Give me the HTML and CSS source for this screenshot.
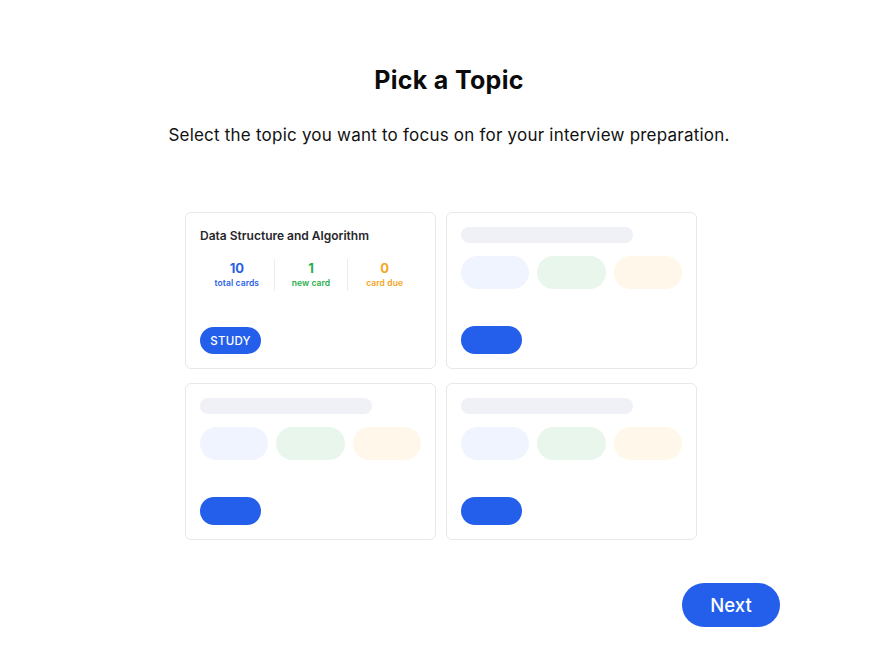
FILE: index.html
```html
<!DOCTYPE html>
<html lang="en">
<head>
<meta charset="utf-8">
<title>Pick a Topic</title>
<link rel="stylesheet" href="styles.css">
</head>
<body>
<main class="page">
  <header class="header">
    <h1 class="title">Pick a Topic</h1>
    <p class="subtitle">Select the topic you want to focus on for your interview preparation.</p>
  </header>

  <section class="grid">
    <article class="card">
      <div class="card-top">
        <h2 class="card-title">Data Structure and Algorithm</h2>
        <div class="stats">
          <div class="stat stat-blue"><span class="num">10</span><span class="lbl">total cards</span></div>
          <div class="stat stat-green"><span class="num">1</span><span class="lbl">new card</span></div>
          <div class="stat stat-orange"><span class="num">0</span><span class="lbl">card due</span></div>
        </div>
      </div>
      <button class="study">STUDY</button>
    </article>

    <article class="card">
      <div class="card-top">
        <div class="sk-bar"></div>
        <div class="sk-pills">
          <span class="sk-pill sk-blue"></span>
          <span class="sk-pill sk-green"></span>
          <span class="sk-pill sk-orange"></span>
        </div>
      </div>
      <span class="sk-btn"></span>
    </article>

    <article class="card">
      <div class="card-top">
        <div class="sk-bar"></div>
        <div class="sk-pills">
          <span class="sk-pill sk-blue"></span>
          <span class="sk-pill sk-green"></span>
          <span class="sk-pill sk-orange"></span>
        </div>
      </div>
      <span class="sk-btn"></span>
    </article>

    <article class="card">
      <div class="card-top">
        <div class="sk-bar"></div>
        <div class="sk-pills">
          <span class="sk-pill sk-blue"></span>
          <span class="sk-pill sk-green"></span>
          <span class="sk-pill sk-orange"></span>
        </div>
      </div>
      <span class="sk-btn"></span>
    </article>
  </section>

  <footer class="footer">
    <button class="next">Next</button>
  </footer>
</main>
</body>
</html>
```

FILE: styles.css
```css
* { box-sizing: border-box; }

html, body {
  margin: 0;
  padding: 0;
  background: #ffffff;
}

body {
  font-family: "Inter", "Open Sans", "DejaVu Sans", sans-serif;
  color: #111111;
}

.page {
  width: 874px;
  height: 665px;
  display: flex;
  flex-direction: column;
  padding-top: 64px;
}

.header {
  padding-left: 24px;
  text-align: center;
}

.title {
  margin: 0;
  font-size: 25px;
  line-height: 32px;
  font-weight: 700;
  color: #0b0b0b;
  letter-spacing: 0.3px;
}

.subtitle {
  margin: 27px 0 0;
  font-size: 17px;
  line-height: 24px;
  font-weight: 400;
  color: #111111;
  letter-spacing: 0.22px;
}

.grid {
  margin: 65px 0 0 185px;
  width: 512px;
  display: grid;
  grid-template-columns: 251px 251px;
  column-gap: 10px;
  row-gap: 14px;
}

.card {
  height: 157px;
  border: 1px solid #e8e8eb;
  border-radius: 6px;
  background: #ffffff;
  padding: 14px 14px 14px;
  display: flex;
  flex-direction: column;
  justify-content: space-between;
  align-items: flex-start;
}

.card-top {
  width: 100%;
}

.card-title {
  margin: 0;
  font-size: 12px;
  line-height: 18px;
  font-weight: 600;
  color: #27272a;
}

.stats {
  margin-top: 14px;
  display: grid;
  grid-template-columns: 1fr 1fr 1fr;
  width: 221px;
}

.stat {
  display: flex;
  flex-direction: column;
  align-items: center;
  padding: 2px 0;
}

.stat + .stat {
  border-left: 1px solid #ececef;
}

.num {
  font-size: 13px;
  line-height: 15px;
  font-weight: 700;
}

.lbl {
  margin-top: 1px;
  font-size: 8.5px;
  line-height: 12px;
  font-weight: 600;
  letter-spacing: 0.1px;
}

.stat-blue { color: #2a5fe8; }
.stat-green { color: #1fae48; }
.stat-orange { color: #f5a524; }

.study {
  height: 27px;
  width: 61px;
  border: none;
  border-radius: 14px;
  background: #245feb;
  color: #ffffff;
  font-family: inherit;
  font-size: 11.5px;
  font-weight: 500;
  letter-spacing: 0.2px;
  padding: 0;
}

.sk-bar {
  width: 172px;
  height: 16px;
  border-radius: 8px;
  background: #f0f1f6;
}

.sk-pills {
  margin-top: 13px;
  display: flex;
  gap: 8px;
}

.sk-pill {
  width: 68.5px;
  height: 33px;
  border-radius: 17px;
}

.sk-blue { background: #eff4fe; }
.sk-green { background: #e8f6ec; }
.sk-orange { background: #fff8ea; }

.sk-btn {
  width: 61px;
  height: 28px;
  border-radius: 14px;
  background: #245feb;
}

.footer {
  display: flex;
  justify-content: flex-end;
  padding-right: 94px;
  margin-top: 43px;
}

.next {
  width: 98px;
  height: 44px;
  border: none;
  border-radius: 22px;
  background: #245feb;
  color: #ffffff;
  font-family: inherit;
  font-size: 18.5px;
  font-weight: 500;
  padding: 0;
}
```
